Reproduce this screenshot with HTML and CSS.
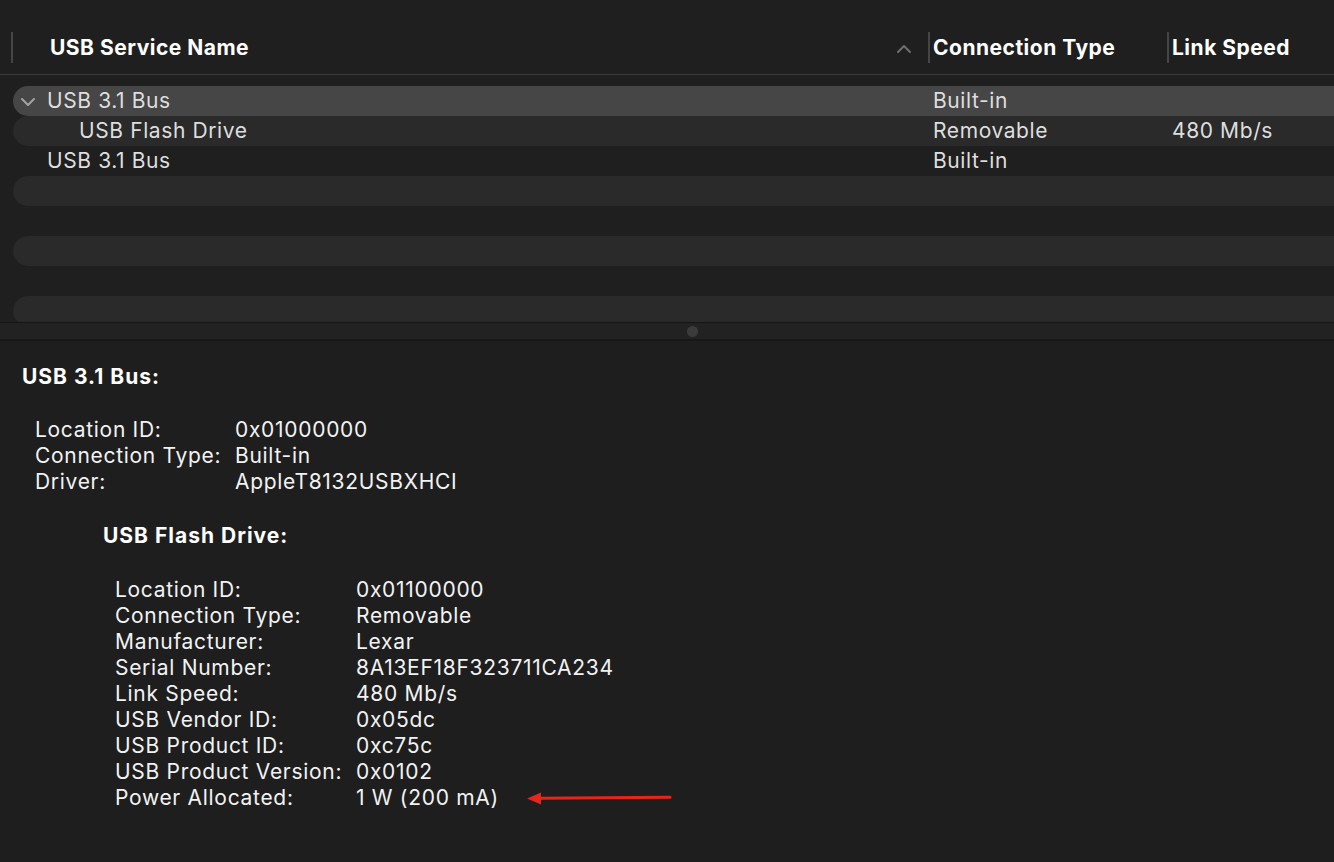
FILE: index.html
```html
<!DOCTYPE html>
<html lang="en">
<head>
    <meta charset="UTF-8">
    <meta name="viewport" content="width=device-width, initial-scale=1.0">
    <title>USB</title>
    <link rel="stylesheet" href="styles.css">
</head>
<body>
    <div class="browser">
        <div class="col-header">
            <div class="hcell name-col">
                <span>USB Service Name</span>
                <svg class="sort-icon" width="16" height="10" viewBox="0 0 16 10"><path d="M2 8 L8 2 L14 8" fill="none" stroke="#6f6f6f" stroke-width="2" stroke-linecap="round" stroke-linejoin="round"/></svg>
            </div>
            <div class="hcell">Connection Type</div>
            <div class="hcell">Link Speed</div>
        </div>

        <div class="rows">
            <div class="row selected">
                <div class="cell name-col">
                    <svg class="disclosure" width="16" height="10" viewBox="0 0 16 10"><path d="M2 2 L8 8 L14 2" fill="none" stroke="#a3a3a3" stroke-width="2" stroke-linecap="round" stroke-linejoin="round"/></svg>
                    USB 3.1 Bus
                </div>
                <div class="cell">Built-in</div>
                <div class="cell"></div>
            </div>
            <div class="row alt">
                <div class="cell name-col child">USB Flash Drive</div>
                <div class="cell">Removable</div>
                <div class="cell">480 Mb/s</div>
            </div>
            <div class="row">
                <div class="cell name-col leaf">USB 3.1 Bus</div>
                <div class="cell">Built-in</div>
                <div class="cell"></div>
            </div>
            <div class="row alt"></div>
            <div class="row"></div>
            <div class="row alt"></div>
            <div class="row"></div>
            <div class="row alt"></div>
        </div>
    </div>

    <div class="splitter"><span class="grip"></span></div>

    <div class="details">
        <div class="section">
            <h2 class="section-title">USB 3.1 Bus:</h2>
            <div class="props bus-props">
                <span>Location ID:</span><span>0x01000000</span>
                <span>Connection Type:</span><span>Built-in</span>
                <span>Driver:</span><span>AppleT8132USBXHCI</span>
            </div>
        </div>

        <div class="section nested">
            <h2 class="section-title">USB Flash Drive:</h2>
            <div class="props drive-props">
                <span>Location ID:</span><span>0x01100000</span>
                <span>Connection Type:</span><span>Removable</span>
                <span>Manufacturer:</span><span>Lexar</span>
                <span>Serial Number:</span><span>8A13EF18F323711CA234</span>
                <span>Link Speed:</span><span>480 Mb/s</span>
                <span>USB Vendor ID:</span><span>0x05dc</span>
                <span>USB Product ID:</span><span>0xc75c</span>
                <span>USB Product Version:</span><span>0x0102</span>
                <span>Power Allocated:</span>
                <span class="power">1 W (200 mA)
                    <svg class="arrow" width="150" height="20" viewBox="0 0 150 20"><path d="M14 9.3 L146 8.2" stroke="#e5261b" stroke-width="3" stroke-linecap="round"/><path d="M3 9.5 L17 3.5 L17 15.5 Z" fill="#e5261b"/></svg>
                </span>
            </div>
        </div>
    </div>
</body>
</html>
```

FILE: styles.css
```css
* {
    margin: 0;
    padding: 0;
    box-sizing: border-box;
}

body {
    font-family: 'Inter', 'Liberation Sans', sans-serif;
    background: #1e1e1e;
    color: #e0e0e0;
    width: 1334px;
    height: 862px;
    overflow: hidden;
}

/* 上半部分：列表 */
.browser {
    height: 322px;
    overflow: hidden;
    background: #1f1f1f;
}

.col-header {
    height: 75px;
    padding-top: 32px;
    border-bottom: 1px solid #3b3b3b;
    display: grid;
    grid-template-columns: 928px 239px 1fr;
}

.hcell {
    height: 31px;
    display: flex;
    align-items: center;
    border-left: 2px solid #454545;
    padding-left: 3px;
    font-size: 21px;
    font-weight: 700;
    color: #ffffff;
    letter-spacing: 0.5px;
}

.hcell.name-col {
    margin-left: 11px;
    padding-left: 37px;
    padding-right: 16px;
    justify-content: space-between;
}

.sort-icon {
    margin-top: 2px;
}

.rows {
    padding-top: 11px;
    padding-left: 13px;
}

.row {
    height: 30px;
    display: grid;
    grid-template-columns: 915px 239px 1fr;
    border-radius: 15px 0 0 15px;
    font-size: 21px;
    line-height: 30px;
    color: #dedede;
    letter-spacing: 0.6px;
}

.row.selected {
    background: #464646;
}

.row.alt {
    background: #2a2a2a;
}

.cell {
    padding-left: 5px;
    white-space: nowrap;
}

.cell.name-col {
    display: flex;
    align-items: center;
    padding-left: 7px;
}

.disclosure {
    width: 16px;
    margin-right: 11px;
    margin-top: 2px;
}

.cell.name-col.child {
    padding-left: 66px;
}

.cell.name-col.leaf {
    padding-left: 34px;
}

/* 分隔条 */
.splitter {
    height: 19px;
    background: #222222;
    border-top: 1px solid #151515;
    border-bottom: 2px solid #181818;
    display: flex;
    justify-content: center;
    align-items: center;
}

.grip {
    width: 11px;
    height: 11px;
    border-radius: 50%;
    background: #3b3b3b;
    margin-left: 50px;
}

/* 下半部分：详细信息 */
.details {
    padding: 23px 0 0 22px;
    color: #f2f2f2;
    font-size: 21px;
    line-height: 26px;
}

.section-title {
    font-size: 21px;
    font-weight: 700;
    color: #ffffff;
    line-height: 26px;
    letter-spacing: 1px;
}

.props {
    display: grid;
    margin-top: 27px;
    margin-left: 13px;
    letter-spacing: 0.7px;
}

.bus-props {
    grid-template-columns: 200px 1fr;
}

.section.nested {
    margin-top: 28px;
    margin-left: 81px;
}

.drive-props {
    grid-template-columns: 241px 1fr;
    margin-left: 12px;
    margin-top: 28px;
}

.power {
    position: relative;
}

.arrow {
    position: absolute;
    left: 168px;
    top: 4px;
}
```
